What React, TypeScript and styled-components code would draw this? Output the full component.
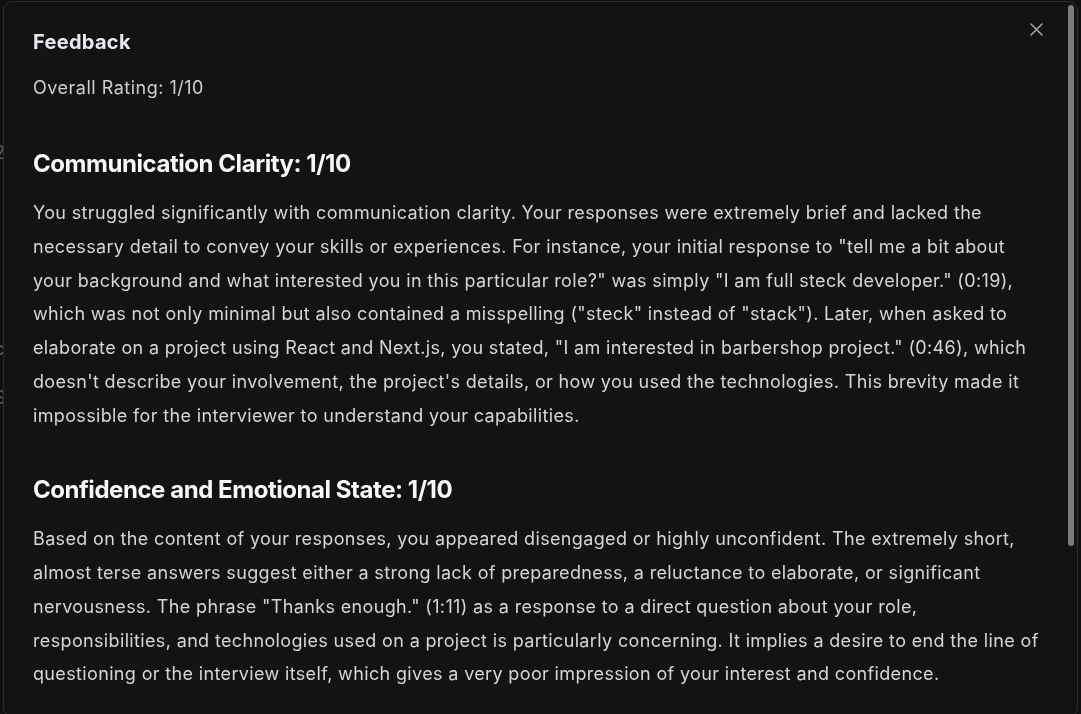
import React from "react";
import styled, { createGlobalStyle } from "styled-components";

const Global = createGlobalStyle`
  html, body { margin: 0; padding: 0; height: 100%; overflow: hidden; }
  body { background: #1a1a1a; font-family: Inter, "Noto Sans", sans-serif; }
`;

const Page = styled.div`
  display: flex;
  flex-direction: column;
  padding: 142px 0 0 0;
  margin-left: -6px;
  gap: 28px;
  color: #8a8a8a;
  font-family: Inter, sans-serif;
  font-size: 18px;
`;

const Overlay = styled.div`
  position: fixed;
  inset: 0;
  background: rgba(0, 0, 0, 0.35);
  display: flex;
  padding: 1px 3px 0 3px;
  box-sizing: border-box;
`;

const Modal = styled.div`
  position: relative;
  flex: 1;
  height: calc(100vh + 2px);
  box-sizing: border-box;
  background: #131313;
  border: 1px solid #2c2c2c;
  border-radius: 9px;
  overflow: hidden;
  display: flex;
`;

const Scroll = styled.div`
  flex: 1;
  overflow-y: auto;
  padding-right: 10px;
  &::-webkit-scrollbar { display: none; }
`;

const Thumb = styled.div`
  position: absolute;
  top: 3px;
  right: 3px;
  width: 6px;
  height: 541px;
  border-radius: 3px;
  background: #7b7b7b;
`;

const Body = styled.div`
  display: flex;
  flex-direction: column;
  padding: 26px 26px 236px 29px;
  letter-spacing: 0.35px;
`;

const Title = styled.h2`
  margin: 0;
  font-size: 20px;
  line-height: 28px;
  font-weight: 700;
  color: #e9eaf0;
  letter-spacing: 0.3px;
`;

const Rating = styled.p`
  margin: 18px 0 0 0;
  font-size: 18px;
  line-height: 28px;
  color: #cfcfcf;
  letter-spacing: 0.5px;
`;

const Section = styled.section<{ $gap: number }>`
  margin-top: ${(p) => p.$gap}px;
  display: flex;
  flex-direction: column;
  gap: 16px;
`;

const Heading = styled.h3`
  margin: 0;
  font-size: 24px;
  line-height: 32px;
  font-weight: 700;
  color: #f7f7f7;
  letter-spacing: -0.45px;
`;

const Para = styled.p`
  margin: 0;
  font-size: 18px;
  line-height: 1.875;
  color: #d6d6d6;
`;

const Close = styled.button`
  position: absolute;
  top: 17px;
  right: 31px;
  width: 20px;
  height: 20px;
  padding: 0;
  border: none;
  background: transparent;
  color: #a8a8a8;
  display: flex;
  align-items: center;
  justify-content: center;
  cursor: pointer;
`;

export default function App() {
  return (
    <>
      <Global />
      <Page>
        <span>2</span>
        <span>l</span>
        <span>i</span>
        <span>l</span>
        <span>c</span>
        <span>S</span>
        <span>t</span>
      </Page>
      <Overlay>
        <Modal>
          <Scroll>
            <Body>
              <Title>Feedback</Title>
              <Rating>Overall Rating: 1/10</Rating>
              <Section $gap={46}>
                <Heading>Communication Clarity: 1/10</Heading>
                <Para>
                  You struggled significantly with communication clarity. Your responses were extremely brief and lacked the necessary detail to convey your skills or experiences. For instance, your initial response to "tell me a bit about your background and what interested you in this particular role?" was simply "I am full steck developer." (0:19), which was not only minimal but also contained a misspelling ("steck" instead of "stack"). Later, when asked to elaborate on a project using React and Next.js, you stated, "I am interested in barbershop project." (0:46), which doesn't describe your involvement, the project's details, or how you used the technologies. This brevity made it impossible for the interviewer to understand your capabilities.
                </Para>
              </Section>
              <Section $gap={42}>
                <Heading>Confidence and Emotional State: 1/10</Heading>
                <Para>
                  Based on the content of your responses, you appeared disengaged or highly unconfident. The extremely short, almost terse answers suggest either a strong lack of preparedness, a reluctance to elaborate, or significant nervousness. The phrase "Thanks enough." (1:11) as a response to a direct question about your role, responsibilities, and technologies used on a project is particularly concerning. It implies a desire to end the line of questioning or the interview itself, which gives a very poor impression of your interest and confidence.
                </Para>
              </Section>
            </Body>
          </Scroll>
          <Thumb />
          <Close aria-label="Close">
            <svg width="13" height="13" viewBox="0 0 13 13" fill="none">
              <path d="M1 1L12 12M12 1L1 12" stroke="currentColor" strokeWidth="1.5" strokeLinecap="round" />
            </svg>
          </Close>
        </Modal>
      </Overlay>
    </>
  );
}
